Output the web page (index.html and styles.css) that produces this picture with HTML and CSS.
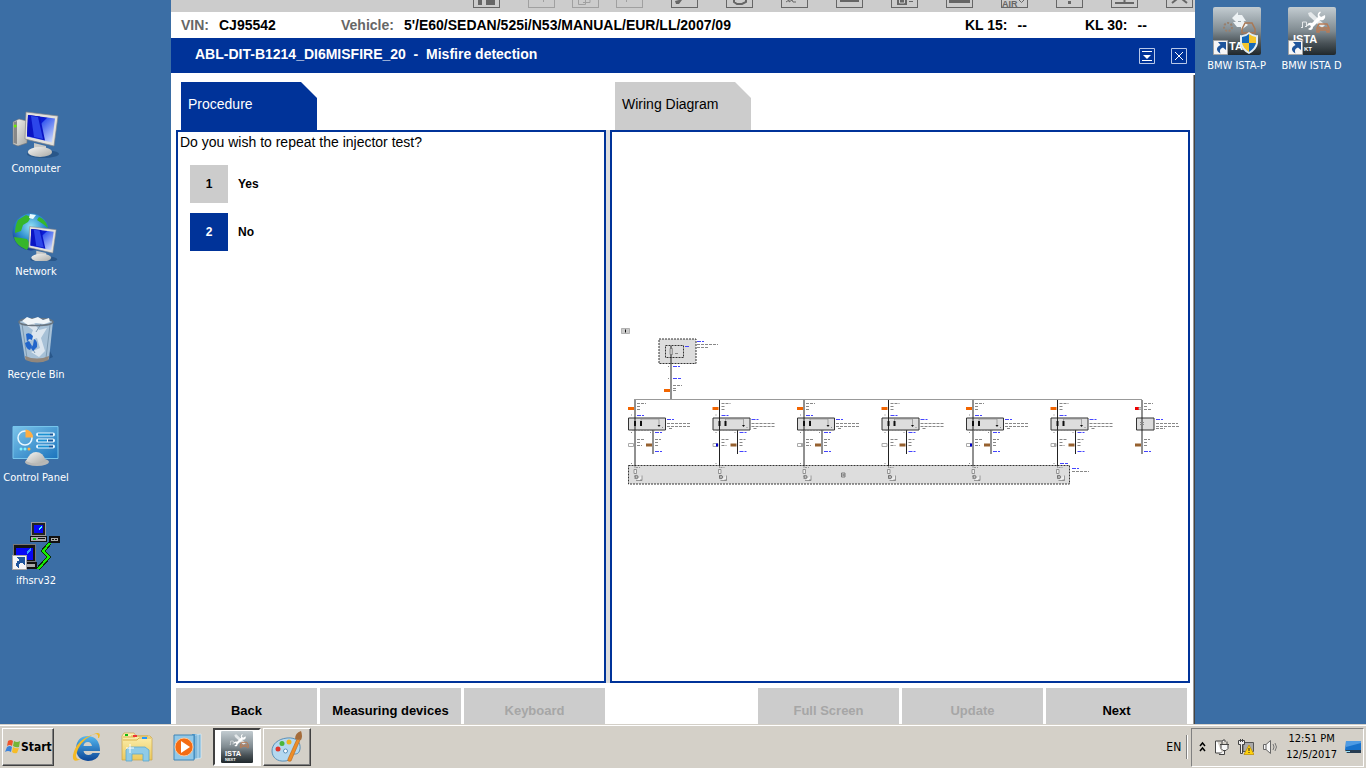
FILE: index.html
```html
<!DOCTYPE html>
<html lang="en">
<head>
<meta charset="utf-8">
<title>ISTA - Misfire detection</title>
<link rel="stylesheet" href="styles.css">
</head>
<body>
<svg class="defs" width="0" height="0" aria-hidden="true">
  <defs>
    <linearGradient id="scr" x1="0" y1="0" x2="1" y2="1"><stop offset="0" stop-color="#0a12a8"/><stop offset=".4" stop-color="#0a1cd8"/><stop offset=".42" stop-color="#3b5cf0"/><stop offset="1" stop-color="#dbe8ff"/></linearGradient>
    <linearGradient id="silver" x1="0" y1="0" x2="1" y2="1"><stop offset="0" stop-color="#f6f6f4"/><stop offset="1" stop-color="#a9a9a5"/></linearGradient>
    <radialGradient id="globe" cx=".5" cy=".35" r=".7"><stop offset="0" stop-color="#8fe0f5"/><stop offset=".5" stop-color="#2f8fd0"/><stop offset="1" stop-color="#152c86"/></radialGradient>
    <linearGradient id="ista" x1="0" y1="0" x2="0" y2="1"><stop offset="0" stop-color="#c3ccd1"/><stop offset=".5" stop-color="#7f8a90"/><stop offset=".75" stop-color="#4a5358"/><stop offset="1" stop-color="#20282c"/></linearGradient>
    <linearGradient id="cpl" x1="0" y1="0" x2="1" y2="1"><stop offset="0" stop-color="#7cc4ea"/><stop offset="1" stop-color="#1b74bd"/></linearGradient>
    <linearGradient id="folder" x1="0" y1="0" x2="0" y2="1"><stop offset="0" stop-color="#fdf3b8"/><stop offset="1" stop-color="#ecc95c"/></linearGradient>
    <linearGradient id="ie" x1="0" y1="0" x2="0" y2="1"><stop offset="0" stop-color="#55b8f0"/><stop offset="1" stop-color="#0b4596"/></linearGradient>
    <g id="monitor">
      <ellipse cx="31" cy="44" rx="16" ry="4" fill="#123a68" opacity=".45"/>
      <path d="M22 33l12 3v6H22z" fill="#c9c9c6"/>
      <ellipse cx="28" cy="42" rx="12" ry="5" fill="url(#silver)"/>
      <path d="M14 2l32 4-4 30-29-7z" fill="#e3e1dc" stroke="#85868a" stroke-width=".7"/>
      <path d="M16 5l27 3.500-3 24-25-6z" fill="url(#scr)"/>
      <path d="M16 5l12 1.500 5 24-18-4.500z" fill="#0a14c4"/>
      <path d="M19 6l7 1 5 22-9-2z" fill="#2c46ea"/>
    </g>
    <g id="shortcut">
      <path d="M.5 33.500h14v14H.5z" fill="#f6f6f6" stroke="#a5a5a5"/>
      <path d="M5 35h8v8l-3-2.500c-3 1-3.500 3-2.500 6C3 44 2.500 40.500 7.500 38z" fill="#1f559c"/>
    </g>
    <g id="tools">
      <path d="M20 6l3-1 14 13-3 3-13-12z" fill="#e4e8ea"/>
      <path d="M33 5l-2 3 2 2 4-2c1 4-2 6-5 5l-7 7c0 3-3 4-5 2l3-2-1-2-3 1c0-3 3-4 5-3l6-6c-1-3 1-6 3-5z" fill="#fff"/>
      <path d="M14.500 20v-5h4v4M13 20.500h2M17 19.500h2" fill="none" stroke="#e5e8ea"/>
      <path d="M29 21l2-4h8l2 4v4h-2v-2h-8v2h-2zM29 21h12" fill="none" stroke="#b77b55" stroke-width="1.500"/>
    </g>
    <!-- one fuel injector with its supply, ground and control wire -->
    <g id="injector">
      <path d="M628.500 418h37v12h-37z" class="module"/>
      <path d="M635 400v66" class="wire"/>
      <path d="M653 430v24" class="wire"/>
      <path d="M628 407h6v3h-6z" class="orange"/>
      <path d="M646 443.500h6v3h-6z" class="brown"/>
      <path d="M634 421h2v5h-2zM640 421h2v5h-2z" fill="#111"/>
      <path d="M641 421v-2h18v6" fill="none" stroke="#888" stroke-width=".7"/>
      <path d="M657.500 425h3l-1.500 2z" fill="#111"/><path d="M662 427.500h1" class="txt"/>
      <path d="M637 403.500h9M637 406.500h4M637 409.500h4M667 423.500h24M667 426.500h23M669 428.500h4M637 439.500h8M637 442.500h3M637 445.500h5M655 439.500h6M655 442.500h3M655 445.500h3" class="txt"/>
      <path d="M637 415.500h7M667 419.500h7M655 432.500h7M655 451.500h7" class="blue"/>
      <path d="M631 415h1M631 432.500h1M650 432.500h1M631 463.500h1" class="txt"/>
      <path d="M632 430.500h24" stroke="#777" stroke-width=".6" stroke-dasharray="2 1"/>
    </g>
    <g id="driver">
      <path d="M635 466v13M636 467.500h4" stroke="#777" stroke-width=".7" stroke-dasharray="2 1"/>
      <path d="M634 469.500h2.500v4H634zM642 475.500v5h-6M640 480h2" fill="#eee" stroke="#777" stroke-width=".7"/>
      <circle cx="636.500" cy="477" r="1.600" fill="#bbb" stroke="#555" stroke-width=".7"/>
    </g>
  </defs>
</svg>

<main class="desktop">
  <nav class="icons icons-left" aria-label="Desktop">
    <a class="shortcut" href="#computer">
      <svg viewBox="0 0 48 48"><path d="M1 12l6-3 8 2v22l-9 3-5-2z" fill="url(#silver)" stroke="#777" stroke-width=".6"/><path d="M1.500 12l3.500-1v23l-3.500-1z" fill="#888"/><circle cx="3.200" cy="16" r="1.500" fill="#68f000"/><use href="#monitor"/></svg>
      <span>Computer</span></a>
    <a class="shortcut" href="#network">
      <svg viewBox="0 0 48 48"><circle cx="19" cy="19" r="18.500" fill="url(#globe)"/><path d="M6 7l8-5 5 2-3 5-5 3-2 6-6 2c0-5 1-9 3-13zM9 25l6 1 3 5-3 6C8 34 3 30 2 24zM27 4c5 2 8 6 9 11l-5-4-6-4z" fill="#36b62b"/><path d="M18 1l6 1-3 4-4-1z" fill="#e9fbff"/><g transform="translate(6 12) scale(.83 .78)"><use href="#monitor"/></g></svg>
      <span>Network</span></a>
    <a class="shortcut" href="#recycle-bin">
      <svg viewBox="0 0 48 48"><path d="M32 45l9-4-3-6z" fill="#18406f" opacity=".5"/><path d="M7 5h34l-4 38q-11 6-24 0z" fill="#b4cadd" opacity=".9"/><path d="M14 9l7 5-4 11 8-3 3 10-9 4 8 5 6-6-4-13 6-10-8 2-5-7z" fill="#fff" opacity=".6"/><path d="M10 8l5 34M38 9l-4 33M29 8l-5 8M18 29l5 8" stroke="#7c99b1" fill="none"/><path d="M13 40q12 5 24 0l-.5 4q-11 5-23 0z" fill="#92877c"/><ellipse cx="24" cy="6" rx="17" ry="3.500" fill="none" stroke="#697580" stroke-width="1.500"/><path d="M10 5l5-4 5 2 6-2 5 3 6-2 1 4-6 2-8-1-8 2z" fill="#f0f5f8"/><path d="M14 18q4-2 7 2l-1 4-3-1-2 3zM13 27l4-2 3 5-2 4q-4-1-5-7zM22 23q4 2 3 8l-4 4-2-3 2-3z" fill="#2165ca"/></svg>
      <span>Recycle Bin</span></a>
    <a class="shortcut" href="#control-panel">
      <svg viewBox="0 0 48 48"><path d="M1 7.500h45v32H1z" fill="url(#cpl)" stroke="#76c5ec"/><circle cx="13" cy="19" r="7" fill="none" stroke="#e8f7ff" stroke-width="1.500"/><path d="M13.500 18.500v-8a8 8 0 0 1 7.500 8z" fill="#ffae42"/><path d="M26 15.500h15M26 21.500h15M26 27.500h15" stroke="#e6f6ff" stroke-width="4" stroke-linecap="round"/><path d="M26 15.500h12M26 21.500h9M26 27.500h11" stroke="#1a90d2" stroke-width="2"/><path d="M38 15.500h3M36 21.500h5M37 27.500h4" stroke="#16569a" stroke-width="2"/><circle cx="9" cy="30" r="1.500" fill="#7ff2ff"/><circle cx="13" cy="30" r="1.500" fill="#7ff2ff"/><circle cx="17" cy="30" r="1.500" fill="#ffae42"/><ellipse cx="25" cy="43" rx="12" ry="4" fill="#b8b8b6"/><path d="M14 42q4-9 10-9 7 0 10 9-10 5-20 0z" fill="url(#silver)"/></svg>
      <span>Control Panel</span></a>
    <a class="shortcut" href="#ifhsrv32">
      <svg viewBox="0 0 48 48" shape-rendering="crispEdges"><path d="M19 0h15v14H19z" fill="#999"/><path d="M20 1h13v12H20z" fill="#222"/><path d="M22 3h9v8h-9z" fill="#0808f5"/><path d="M28 5l2-2v2l-3 3z" fill="#4ff"/><path d="M18 14h17v6H18zM37 14h11v7H37z" fill="#111"/><path d="M19 15h15v4H19zM39 16h7v3h-7z" fill="#ababab"/><path d="M21 16h3v2h-3z" fill="#1c1"/><path d="M26 16h7v1h-7zM40 17h2v1h-2zM43 17h2v1h-2z" fill="#111"/><path d="M1 22h23v18H1z" fill="#777"/><path d="M2 23h21v16H2z" fill="#151515"/><path d="M4 26h17v12H4z" fill="#0808f5"/><path d="M15 29l4-3v3l-4 3z" fill="#39f"/><path d="M14 40h11v7H14z" fill="#111"/><path d="M15 42h8v3h-8z" fill="#aaa"/><path d="M38 21l-7 8 6 6-11 12" fill="none" stroke="#0b2d08" stroke-width="4"/><path d="M38 21l-7 8 6 6-11 12" fill="none" stroke="#16ef00" stroke-width="2"/><use href="#shortcut"/></svg>
      <span>ifhsrv32</span></a>
  </nav>

  <section class="window" aria-label="ISTA">
    <div class="toolbar">
      <button aria-label="Layout"><svg viewBox="0 0 27 8"><path class="f" d="M5 0h4v5H5zM13 0h9v5h-9z"/></svg></button>
      <div class="group">
        <button aria-label="Previous page" disabled><svg viewBox="0 0 27 8"><path d="M15.500 0v2"/></svg></button>
        <button aria-label="Copy" disabled><svg viewBox="0 0 27 8"><path d="M6.500 0v4.500h7V0M11 2.500h7V0"/></svg></button>
        <button aria-label="Next page" disabled><svg viewBox="0 0 27 8"><path d="M10.500 0v2"/></svg></button>
      </div>
      <button aria-label="Settings"><svg viewBox="0 0 27 8"><path class="f" d="M4 1l4-1h3L8 4H5z"/></svg></button>
      <button aria-label="Refresh"><svg viewBox="0 0 27 8"><path stroke-width="2" d="M8 0v2l3 2h5l4-2V0"/></svg></button>
      <button aria-label="Measurement"><svg viewBox="0 0 27 8"><path d="M5 2l3-2v2l3-2 1 2h3"/></svg></button>
      <button aria-label="Display"><svg viewBox="0 0 27 8"><path class="f" d="M4 0h19v2H4z"/></svg></button>
      <button aria-label="Save list"><svg viewBox="0 0 27 8"><path class="f" d="M6 0h10v5H6zM18 1h4v1h-4z"/><path stroke="#ccc" d="M8.500 0v3h5V0"/></svg></button>
      <button aria-label="Keyboard panel"><svg viewBox="0 0 27 8"><path class="f" d="M3 0h21v3H3z"/></svg></button>
      <button class="air" aria-label="AIR">AIR<svg viewBox="0 0 7 8"><path d="M1 1l2.500 2.500L6 1"/></svg></button>
      <button aria-label="Help"><svg viewBox="0 0 27 8"><path class="f" d="M12 1h3v3h-3z"/></svg></button>
      <button aria-label="Minimize"><svg viewBox="0 0 27 8"><path stroke-width="2" d="M4 3h19M13.500 0v3"/></svg></button>
      <button aria-label="Close application"><svg viewBox="0 0 27 8"><path stroke-width="2" d="M6 3l5-4h5l5 4"/></svg></button>
    </div>

    <dl class="vehicle">
      <div><dt>VIN:</dt><dd>CJ95542</dd></div>
      <div><dt>Vehicle:</dt><dd>5'/E60/SEDAN/525i/N53/MANUAL/EUR/LL/2007/09</dd></div>
      <div class="kl"><dt>KL 15:</dt><dd>--</dd></div>
      <div class="kl"><dt>KL 30:</dt><dd>--</dd></div>
    </dl>

    <header class="titlebar">
      <h1>ABL-DIT-B1214_DI6MISFIRE_20&nbsp; -&nbsp; Misfire detection</h1>
      <button aria-label="Collapse"><svg viewBox="0 0 16 16"><path d="M.5.500h15v15H.5z" fill="none" stroke="#b9c8e8"/><path d="M3 3h10v1H3zM3 12h10v1H3zM4 7h8l-4 4z" fill="#fff"/></svg></button>
      <button aria-label="Close"><svg viewBox="0 0 16 16"><path d="M.5.500h15v15H.5z" fill="none" stroke="#b9c8e8"/><path d="M4 4l8 8M12 4l-8 8" stroke="#fff"/></svg></button>
    </header>

    <div class="work">
      <div class="tabs columns">
        <button class="tab active">Procedure</button>
        <button class="tab">Wiring Diagram</button>
      </div>
      <div class="panels columns">
        <section class="panel">
          <p>Do you wish to repeat the injector test?</p>
          <ul class="answers">
            <li><button id="a1" class="key">1</button><label for="a1">Yes</label></li>
            <li><button id="a2" class="key chosen">2</button><label for="a2">No</label></li>
          </ul>
        </section>
        <section class="panel diagram">
          <svg viewBox="612 320 576 173" role="img" aria-label="Wiring diagram of the injectors">
            <path d="M621.500 328.500h8v5h-8z" fill="#ccc" stroke="#999" stroke-width=".7"/><path d="M625.500 329.500v3" stroke="#111"/>
            <path d="M659 339h37v24.500h-37z" class="unit"/><path d="M665.500 345.500h18v12h-18z" class="unit"/>
            <path d="M671 346v53.500" class="wire"/>
            <path d="M670 348.500h2.500v6H670zM671 346v10" fill="#eee" stroke="#666" stroke-width=".6"/>
            <path d="M675 353.500h4M697 344.500h21M697 347.500h12M668 366.500h1M668 378.500h1M673 385.500h9M673 388.500h4M673 390.500h4" class="txt"/>
            <path d="M685 346.500h5M697 341.500h7M673 366.500h7M673 378.500h8" class="blue"/>
            <path d="M664 389h6v3h-6z" class="orange"/>
            <path d="M634 399.500h508" stroke="#999"/>
            <path d="M628.500 465.500h441v18.500h-441z" class="unit"/>
            <use href="#injector"/><use href="#injector" x="84.500"/><use href="#injector" x="169"/><use href="#injector" x="253.500"/><use href="#injector" x="338"/><use href="#injector" x="422.500"/>
            <use href="#driver"/><use href="#driver" x="84.500"/><use href="#driver" x="169"/><use href="#driver" x="253.500"/><use href="#driver" x="338"/><use href="#driver" x="422.500"/>
            <path d="M628.500 443.500h5v3h-5zM713 443.500h5v3h-5zM797.500 443.500h5v3h-5zM882 443.500h5v3h-5zM966.500 443.500h5v3h-5zM1051 443.500h5v3h-5z" class="plug"/>
            <path d="M716 443.500h2v3h-2zM970 443.500h2v3h-2z" fill="#00c"/><path d="M801 443.500h2v3h-2zM1054 443.500h2v3h-2z" fill="#aaa"/>
            <path d="M841.500 473h3.500v4h-3.500zM842.500 474l2 2M844.500 474l-2 2" fill="none" stroke="#666" stroke-width=".8"/>
            <path d="M1060 463.500h8M1072 468.500h7M1156 419.500h7M1144 451.500h7" class="blue"/>
            <path d="M1072 471.500h17M1144 403.500h9M1144 406.500h4M1144 409.500h8M1156 423.500h22M1156 426.500h23M1156 428.500h9M1144 439.500h6M1144 442.500h3M1144 445.500h3" class="txt"/>
            <path d="M1136.500 418h17.500v12h-17.500z" class="module"/><path d="M1142 400v54" class="wire"/>
            <path d="M1140 422.500h4M1140 424.500h4" stroke="#888"/>
            <path d="M1135 407h4v3h-4z" fill="#e00"/><path d="M1139 407.500h2v2h-2z" class="plug"/><path d="M1135 443.500h6v3h-6z" class="brown"/>
          </svg>
        </section>
      </div>
      <footer class="actions">
        <div><button>Back</button><button>Measuring devices</button><button disabled>Keyboard</button></div>
        <div><button disabled>Full Screen</button><button disabled>Update</button><button>Next</button></div>
      </footer>
    </div>
  </section>

  <nav class="icons icons-right" aria-label="Programs">
    <a class="shortcut" href="#ista-p">
      <svg viewBox="0 0 48 48"><rect width="48" height="48" rx="2" fill="url(#ista)"/><path d="M19 11l6-6v3h4l4 6h-8v3zM35 18l-7 5v-3h-4l-4-5h8v-3z" fill="#edf2f4"/><circle cx="15" cy="20" r="4" fill="none" stroke="#98806e" stroke-width="2" stroke-dasharray="2 1.500"/><path d="M29 22l3-6h7l3 6v4H29z" fill="none" stroke="#a97855" stroke-width="1.500"/><text x="16" y="43" class="ista-name">TA</text><use href="#shortcut"/><path d="M36 25q5 4 9 3v8q-1 7-9 11-8-4-9-11v-8q5 1 9-3z" fill="#e2edf5"/><path d="M36 27v9h-7v-6q4 0 7-3zM36 36h7q-1 5-7 9z" fill="#1768b8"/><path d="M36 27q4 3 7 3v6h-7zM29 36h7v9q-6-4-7-9z" fill="#f7c72c"/></svg>
      <span>BMW ISTA-P</span></a>
    <a class="shortcut" href="#ista-d">
      <svg viewBox="0 0 48 48"><rect width="48" height="48" rx="2" fill="url(#ista)"/><use href="#tools"/><text x="5" y="36" class="ista-name">ISTA</text><text x="16" y="44" class="ista-sub">KT</text><use href="#shortcut"/></svg>
      <span>BMW ISTA D</span></a>
  </nav>
</main>

<footer class="taskbar">
  <button class="start"><svg viewBox="0 0 16 16"><path d="M3 2q3-2 5 0L7 7Q5 5 2 7z" fill="#ed542c"/><path d="M9 2q3 2 6 0l-1 6q-3 1-6-1z" fill="#74b537"/><path d="M2 8q3-2 5 0l-1 5q-3-2-6 0z" fill="#3d83da"/><path d="M8 8q3 2 6 1l-2 5q-3 1-5-1z" fill="#f6bc28"/></svg>Start</button>
  <div class="apps">
    <button class="app" aria-label="Internet Explorer"><svg viewBox="0 0 32 32"><path d="M29 20H12.500q1 4 5 4 3 0 4-2H29q-3 8-12 8Q5 29 5 17 6 5 17 5q12 1 12 15zM12.500 15h8.500q-1-4-4-4-4 0-4.500 4z" fill="url(#ie)" fill-rule="evenodd"/><path d="M28 7q3-7-5-4Q5 9 2 24q-1 9 8 4-5 1-5-4Q8 11 21 4q7-3 6 3z" fill="#f5ba25"/></svg></button>
    <button class="app" aria-label="Windows Explorer"><svg viewBox="0 0 32 32"><path d="M1 5l2-3h10l2 3h14l2 2v22H1z" fill="url(#folder)" stroke="#c9a345" stroke-width=".7"/><path d="M2 9h14l2-2h12M2 6h12M10 5h17" stroke="#dbb14b" fill="none"/><path d="M4 3h3v2H4z" fill="#1b1"/><path d="M12 4h4v2h-4z" fill="#e33"/><path d="M21 6h5v2h-5z" fill="#29f"/><path d="M5 30V19l3-3h16l4 3v11h-6v-7H11v7z" fill="#8fcbe7" stroke="#5ca7cd" stroke-width=".8"/><path d="M9 13v9M5 17h8" stroke="#fff"/></svg></button>
    <button class="app" aria-label="Media Player"><svg viewBox="0 0 32 32"><path d="M21 3h7v23l-7 3z" fill="#4f9bd0"/><path d="M24 4l6-1v24l-6 1M27 3v24" fill="#83b9da" stroke="#d9effb" stroke-width=".7"/><path d="M3 4h20v25H3z" fill="#90c8e8" stroke="#3f84b6"/><circle cx="13" cy="16" r="9" fill="#f46b12" stroke="#ffc697"/><path d="M10 10l9 6-9 6z" fill="#fff"/></svg></button>
    <button class="app pressed" aria-label="ISTA"><svg viewBox="0 0 48 48"><rect width="48" height="48" rx="2" fill="url(#ista)"/><use href="#tools"/><text x="6" y="37" class="ista-name">ISTA</text><text x="6" y="45" class="ista-sub">NEXT</text></svg></button>
    <button class="app raised" aria-label="Paint"><svg viewBox="0 0 32 32"><path d="M16 7c9-1 14 4 13 11-1 6-5 5-8 5-3 1-1 7-7 7C6 31 1 26 1 20 1 13 7 8 16 7z" fill="#b4d8ef" stroke="#5b90b7"/><circle cx="7" cy="18" r="2.500" fill="#e0352b"/><circle cx="11" cy="12.500" r="2.500" fill="#49b53a"/><circle cx="18" cy="11" r="2.500" fill="#efb320"/><circle cx="14.500" cy="20" r="2" fill="#fff" stroke="#5b90b7"/><path d="M26 8l3 1-9 21q-4 1-3-2z" fill="#ee8d27" stroke="#b6641a" stroke-width=".6"/><path d="M24 8q0-6 6-8 2 5 0 9z" fill="#a46c3b"/></svg></button>
  </div>
  <button class="lang">EN</button>
  <div class="tray">
    <svg class="chev" viewBox="0 0 7 12"><path d="M1 5l2.500-3L6 5M1 10l2.500-3L6 10" fill="none" stroke="#000" stroke-width="1.500"/></svg>
    <svg viewBox="0 0 16 16"><path d="M3 2h6v-1h2v2M3 2H1.500v12H8" fill="#fff" stroke="#444"/><path d="M6 5.500h9M8 2.500v3M13 2.500v3M7 5.500v4l2 2h3l2-2v-4M10.500 12v3.500H5" fill="#f6f6f6" stroke="#444"/></svg>
    <svg viewBox="0 0 16 16"><path d="M5 3.500h10.500v9H5z" fill="#aaa" stroke="#555"/><path d="M.5 1.500h6v4h-2v9h-2v-9h-2zM2.500 0v3M4.500 0v3" fill="#eee" stroke="#444"/><path d="M11 6l5 9.500H6z" fill="#ffd20c" stroke="#b98a00" stroke-width=".7"/><path d="M11 9v3M11 13v1" stroke="#222"/></svg>
    <svg viewBox="0 0 16 16"><path d="M1.500 5.500H4L8.500 1.500v13L4 10.500H1.500zM4 5.500v5" fill="#f6f6f6" stroke="#666"/><path d="M11 5q2 3 0 6M13 4q3 4 0 8" fill="none" stroke="#777"/></svg>
    <time datetime="2017-12-05T12:51">12:51 PM<br>12/5/2017</time>
    <svg viewBox="0 0 16 16"><path d="M1 2h15v9H0z" fill="#1772cc"/><path d="M1 2h15v2L1 8z" fill="#4e9be4"/><path d="M0 11h16v3H2z" fill="#253b50"/><path d="M1 12h4v1H1z" fill="#8ee1ff"/></svg>
  </div>
</footer>
</body>
</html>
```
FILE: styles.css
```css
* { box-sizing: border-box; }
body {
  margin: 0;
  height: 100vh;
  display: flex;
  flex-direction: column;
  overflow: hidden;
  background: #3b6ea5;
  color: #000;
  font: 14px "Liberation Sans", Arial, sans-serif;
}
button { font: inherit; color: inherit; border: 0; padding: 0; background: none; }
svg { display: block; }
.defs { position: absolute; }

/* desktop */
.desktop {
  flex: 1;
  min-height: 0;
  display: grid;
  grid-template-columns: 171px minmax(0, 1fr) 171px;
  grid-template-rows: minmax(0, 1fr);
}
.icons { display: flex; }
.icons-left { flex-direction: column; gap: 36px; padding-top: 110px; }
.icons-right { padding: 7px 0 0 4px; }
.shortcut {
  width: 72px;
  display: flex;
  flex-direction: column;
  align-items: center;
  gap: 3px;
  color: #fff;
  text-decoration: none;
  white-space: nowrap;
  font: 11px/16px "DejaVu Sans Condensed", "DejaVu Sans", sans-serif;
}
.icons-right .shortcut { width: 75px; }
.shortcut svg { width: 48px; height: 48px; }
.ista-name { font: bold 11px "Liberation Sans", sans-serif; fill: #fff; }
.ista-sub { font: bold 6px "Liberation Sans", sans-serif; fill: #fff; }

/* application window */
.window { display: flex; flex-direction: column; min-height: 0; background: #fff; }
.toolbar {
  display: flex;
  align-items: flex-start;
  justify-content: flex-end;
  gap: 28px;
  height: 12px;
  padding-right: 2px;
  background: #ccc;
}
.toolbar button {
  width: 27px;
  height: 8px;
  border: solid #666;
  border-width: 0 1px 1px;
  overflow: hidden;
}
.toolbar button svg { width: 27px; height: 8px; margin-left: -1px; fill: none; stroke: #666; }
.toolbar .f { fill: #666; stroke: none; }
.toolbar button:disabled { border-color: #a0a0a0; }
.toolbar button:disabled svg { stroke: #a0a0a0; }
.group { display: flex; gap: 17px; }
.toolbar .air { display: flex; align-items: flex-end; color: #666; font-size: 9px; font-weight: bold; line-height: 6px; }
.toolbar .air svg { width: 7px; margin: 0; }

.vehicle {
  display: grid;
  grid-template-columns: 160px minmax(0, 1fr) 120px 110px;
  align-items: center;
  height: 26px;
  margin: 0;
  padding-left: 10px;
  font-weight: bold;
  white-space: nowrap;
}
.vehicle div { display: flex; gap: 10px; }
.vehicle dt { color: #666; }
.vehicle dd { margin: 0; }
.vehicle .kl dt { color: #000; }

.titlebar {
  display: flex;
  align-items: center;
  gap: 16px;
  height: 35px;
  padding: 0 8px 0 24px;
  background: #039;
  color: #fff;
}
.titlebar h1 { flex: 1; margin: 0; padding-bottom: 4px; font-size: 14px; }
.titlebar svg { width: 16px; height: 16px; }

.work {
  flex: 1;
  min-height: 0;
  display: flex;
  flex-direction: column;
  margin-top: 2px;
  padding: 7px 5px 0;
  box-shadow: inset -1px 0 #444, inset -2px 0 #999;
}
.columns { display: grid; grid-template-columns: minmax(0, 430fr) minmax(0, 580fr); gap: 4px; }
.tab {
  width: 136px;
  height: 48px;
  margin-left: 5px;
  padding: 0 0 4px 7px;
  text-align: left;
  background: #ccc;
  clip-path: polygon(0 0, 120px 0, 100% 16px, 100% 100%, 0 100%);
}
.tab.active { background: #039; color: #fff; }
.panels { flex: 1; min-height: 0; background: #ddd; }
.panel { border: 2px solid #039; background: #fff; overflow: hidden; }
.panel p { margin: 0; padding-left: 2px; line-height: 20px; }
.answers {
  list-style: none;
  margin: 13px 0 0;
  padding: 0 0 0 12px;
  display: flex;
  flex-direction: column;
  gap: 10px;
  font-size: 12px;
  font-weight: bold;
}
.answers li { display: flex; align-items: center; gap: 10px; }
.key { width: 38px; height: 38px; background: #ccc; }
.key.chosen { background: #039; color: #fff; }

.diagram { display: flex; align-items: center; }
.diagram svg { width: 100%; }
.unit { fill: #ddd; stroke: #333; stroke-dasharray: 2 1; }
.module { fill: #ddd; stroke: #333; }
.wire { stroke: #222; }
.txt { stroke: #888; stroke-dasharray: 3 1; }
.blue { stroke: #44f; stroke-dasharray: 4 1; }
.orange { fill: #f26500; }
.brown { fill: #96612f; }
.plug { fill: #fff; stroke: #aaa; stroke-width: 1; }

.actions { display: flex; justify-content: space-between; height: 36px; margin-top: 5px; padding-right: 3px; overflow: hidden; }
.actions div { display: flex; gap: 3px; }
.actions button { width: 141px; height: 44px; background: #ccc; font-size: 13px; font-weight: bold; }
.actions button:disabled { color: #a6a6a6; }

/* taskbar */
.taskbar {
  display: flex;
  align-items: center;
  height: 44px;
  padding: 2px 2px 0;
  background: #d4d0c8;
  box-shadow: inset 0 1px #d4d0c8, inset 0 2px #fff;
  font: 12px/16px "DejaVu Sans Condensed", "DejaVu Sans", sans-serif;
}
.start, .raised {
  border: 1px solid;
  border-color: #fff #404040 #404040 #fff;
  box-shadow: inset -1px -1px #808080;
}
.start {
  display: flex;
  align-items: center;
  width: 52px;
  height: 38px;
  padding-left: 2px;
  font-weight: bold;
}
.start svg { width: 16px; height: 16px; }
.apps { display: flex; align-items: center; gap: 2px; margin-left: 9px; flex: 1; }
.app { width: 48px; height: 38px; display: grid; place-items: center; }
.app svg { width: 32px; height: 32px; }
.pressed { border: 2px solid; border-color: #404040 #fff #fff #404040; background: #fff; }
.lang { padding-right: 5px; line-height: 24px; border-right: 1px solid #808080; box-shadow: 1px 0 #fff; }
.tray {
  display: flex;
  align-items: center;
  gap: 8px;
  height: 39px;
  margin-left: 4px;
  padding: 0 2px 0 7px;
  border: 1px solid;
  border-color: #808080 #fff #fff #808080;
}
.tray svg { width: 16px; height: 16px; }
.tray .chev { width: 7px; height: 12px; }
.tray time { text-align: center; white-space: nowrap; font-size: 11px; }
```
